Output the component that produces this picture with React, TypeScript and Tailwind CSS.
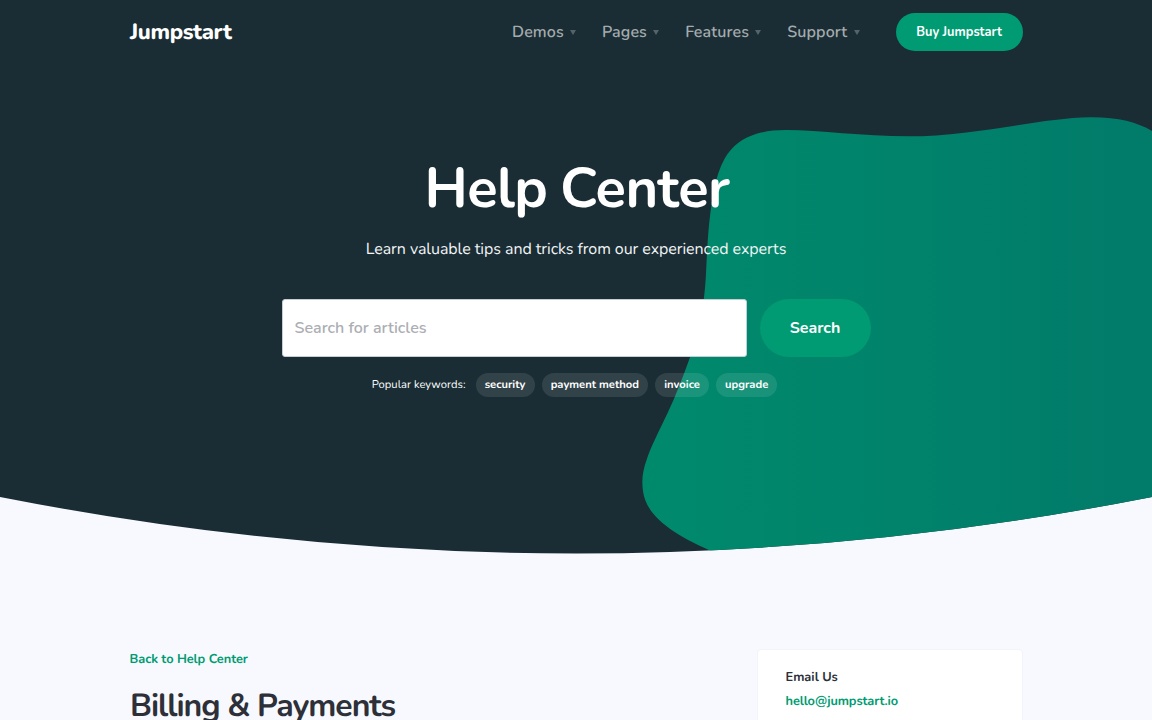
const navItems = ["Demos", "Pages", "Features", "Support"];
const keywords = ["security", "payment method", "invoice", "upgrade"];

function Backdrop() {
  return (
    <svg
      className="absolute inset-0 h-[554px] w-full"
      viewBox="0 0 1152 554"
      preserveAspectRatio="none"
      aria-hidden="true"
    >
      <defs>
        <linearGradient id="blob" gradientUnits="userSpaceOnUse" x1="642" y1="0" x2="1152" y2="0">
          <stop offset="0" stopColor="#008a6c" />
          <stop offset="1" stopColor="#017b6a" />
        </linearGradient>
        <clipPath id="curve">
          <path d="M0 0H1152V497Q576 610 0 497Z" />
        </clipPath>
      </defs>
      <g clipPath="url(#curve)">
        <rect width="1152" height="554" fill="#1a2d34" />
        <path
          fill="url(#blob)"
          d="M1152 131C1137 122 1117 117 1090 117.300C1040 118 975 136.300 908 136.300C862 136.300 820 130 786 130C750 130 734 143 725 158C714 177 711 205 708.300 233C706 262 706.500 280 703.800 299C701 319 697 339 690.200 356.700C683 377 676 395 667.500 413.300C659 431 651 447 647 458.700C642.500 471 641.500 480 643 491C646 516 673 535 716 553L720 560H1152Z"
        />
      </g>
    </svg>
  );
}

function Header() {
  return (
    <header className="flex h-16 items-center">
      <a className="text-[22px] font-extrabold leading-none tracking-[-0.35px] text-white">Jumpstart</a>
      <nav className="ml-auto flex items-center">
        {navItems.map((item) => (
          <a
            key={item}
            className="mr-[25.8px] flex items-center text-base font-semibold tracking-[0.12px] text-[#a4abae]"
          >
            {item}
            <svg className="ml-[6.4px] h-[5px] w-[6px]" viewBox="0 0 6 5" aria-hidden="true">
              <path d="M0 0H6L3 5Z" fill="#566369" />
            </svg>
          </a>
        ))}
      </nav>
      <button className="-mr-[0.5px] ml-[10px] h-[38px] w-[127px] rounded-full bg-[#009b72] pt-px text-[12.8px] font-bold text-white">
        Buy Jumpstart
      </button>
    </header>
  );
}

function Hero() {
  return (
    <div className="flex flex-col items-center pt-[89px] text-white">
      <h1 className="pl-0.5 text-[56px] font-bold leading-[72px] tracking-[-0.55px] [word-spacing:-2px]">
        Help Center
      </h1>
      <p className="mt-3 text-base leading-6 tracking-[-0.06px] text-[#f1f4f5]">
        Learn valuable tips and tricks from our experienced experts
      </p>
      <form className="mt-[38px] flex gap-[13px]">
        <input
          className="h-[58px] w-[465px] rounded-[3px] border border-[#c5ced6] bg-white px-3 text-base font-semibold text-[#2d3039] placeholder:text-[#abaeb3]"
          placeholder="Search for articles"
        />
        <button type="button" className="h-[58px] w-[111px] rounded-full bg-[#009b72] text-base font-bold">
          Search
        </button>
      </form>
      <div className="mt-4 flex items-center gap-[7px] pr-[3px] text-[11.2px] text-white">
        <span className="mr-[3px] tracking-[0.04px]">Popular keywords:</span>
        {keywords.map((word) => (
          <span key={word} className="flex h-6 items-center rounded-full bg-white/10 px-[9.1px] pt-px font-bold">
            {word}
          </span>
        ))}
      </div>
    </div>
  );
}

export default function App() {
  return (
    <div className="relative h-[720px] overflow-hidden bg-[#f8f9fe] font-['Nunito','Lato',sans-serif] [text-rendering:geometricPrecision]">
      <Backdrop />
      <div className="relative mx-auto w-[892px]">
        <div className="h-[554px]">
          <Header />
          <Hero />
        </div>
        <main className="flex items-start justify-between pt-[95px]">
          <div>
            <a className="-ml-[0.5px] mt-px block text-[12.8px] font-bold leading-[19px] tracking-[-0.06px] text-[#009b72]">
              Back to Help Center
            </a>
            <h2 className="mt-[17px] text-[32px] font-bold leading-[42px] tracking-[-1.03px] text-[#2d3039]">
              Billing &amp; Payments
            </h2>
          </div>
          <aside className="-mr-[0.5px] h-40 w-[266px] rounded border border-[#f1f4f8] bg-white px-7 pt-[18px] text-[12.8px] font-bold leading-[19px]">
            <p className="text-[#2d3039]">Email Us</p>
            <a className="mt-[5px] block tracking-[-0.1px] text-[#009b72]">hello@jumpstart.io</a>
          </aside>
        </main>
      </div>
    </div>
  );
}
